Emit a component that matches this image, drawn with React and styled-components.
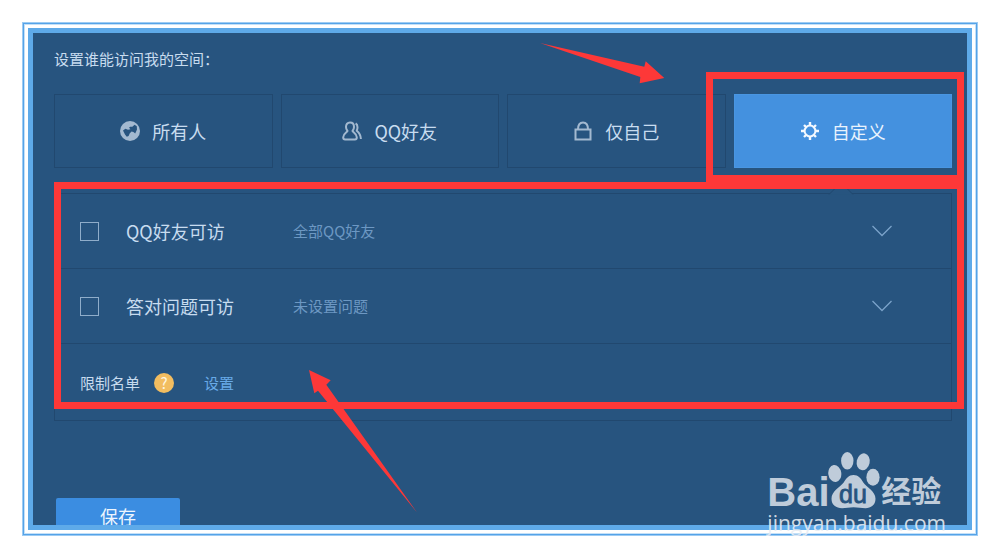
import React from "react";
import styled, { createGlobalStyle } from "styled-components";

const RED = "#fd3838";
const LINE = "#21486f";

const options = [
  { icon: "globe", title: "所有人" },
  { icon: "friends", title: "QQ好友" },
  { icon: "lock", title: "仅自己" },
  { icon: "gear", title: "自定义", active: true },
];

const rules = [
  { id: "friends", title: "QQ好友可访", text: "全部QQ好友" },
  { id: "question", title: "答对问题可访", text: "未设置问题" },
];

const GlobalStyle = createGlobalStyle`
  * {
    box-sizing: border-box;
  }
  body {
    margin: 0;
    background: #fff;
    font-family: "Noto Sans CJK SC", sans-serif;
  }
  button {
    font-family: inherit;
    cursor: pointer;
  }
`;

const Frame = styled.div`
  position: relative;
  margin: 22px;
  padding: 5px;
  border: 1px solid #9ccbf3;
  box-shadow: inset 0 0 0 1px #55a3e8, inset 0 0 0 2px #c3e0f8;
`;

const Page = styled.main`
  padding: 16px 15px 0 21px;
  border: 5px solid #5eaae9;
  background: #27547f;
  color: #c8dcef;
`;

const Title = styled.h1`
  margin: 0 0 25px;
  font-size: 15px;
  line-height: 20px;
  font-weight: 400;
`;

const Options = styled.div`
  position: relative;
  display: grid;
  grid-template-columns: repeat(4, 1fr);
  gap: 8px;
`;

const OptionCell = styled.div`
  position: relative;
  display: flex;
`;

const OptionButton = styled.button`
  flex: 1;
  display: flex;
  align-items: center;
  justify-content: center;
  gap: 12px;
  height: 74px;
  padding: 0;
  border: 1px solid ${({ $active }) => ($active ? "#4996e2" : LINE)};
  background: ${({ $active }) => ($active ? "#4491df" : "transparent")};
  color: ${({ $active }) => ($active ? "#e9f3fd" : "#c8dcef")};
  font-size: 18px;
  line-height: 24px;
`;

const OptionIcon = styled.svg`
  width: 20px;
  height: 20px;
  color: ${({ $active }) => ($active ? "#f4f9ff" : "#a3b9d0")};
`;

const OptionMark = styled.div`
  position: absolute;
  z-index: 2;
  top: -22px;
  right: -12px;
  bottom: -14px;
  left: -28px;
  border: 7px solid ${RED};
  pointer-events: none;
`;

const OptionArrow = styled.svg`
  position: absolute;
  z-index: 2;
  top: -54px;
  right: 285px;
  width: 128px;
  height: 46px;
  fill: ${RED};
  pointer-events: none;
`;

const Panel = styled.section`
  position: relative;
  margin-top: 25px;
  border: 1px solid ${LINE};
`;

const PanelNotch = styled.svg`
  position: absolute;
  top: -13px;
  right: 97px;
  width: 26px;
  height: 14px;
`;

const PanelMark = styled.div`
  position: absolute;
  z-index: 2;
  top: -12px;
  right: -13px;
  bottom: 11px;
  left: -1px;
  border: 7px solid ${RED};
  pointer-events: none;
`;

const PanelArrow = styled.svg`
  position: absolute;
  z-index: 2;
  top: 174px;
  left: 253px;
  width: 110px;
  height: 146px;
  fill: ${RED};
  pointer-events: none;
`;

const Rule = styled.div`
  display: grid;
  grid-template-columns: 46px 167px 1fr 20px;
  align-items: center;
  height: 75px;
  padding: 0 59px 0 25px;
  border-bottom: 1px solid ${LINE};
`;

const Checkbox = styled.input`
  appearance: none;
  width: 19px;
  height: 19px;
  margin: 0;
  border: 1px solid #8fadca;
  &:checked {
    background: #4491df;
  }
`;

const RuleLabel = styled.label`
  font-size: 18px;
  line-height: 24px;
`;

const RuleText = styled.span`
  color: #6d98c3;
  font-size: 15px;
  line-height: 20px;
`;

const Expand = styled.button`
  display: flex;
  padding: 0;
  border: 0;
  background: none;
  color: #7ba3ca;
`;

const Limit = styled.div`
  display: flex;
  align-items: center;
  height: 76px;
  padding: 2px 25px 0;
  font-size: 15px;
  line-height: 20px;
`;

const Help = styled.button`
  width: 20px;
  height: 20px;
  margin: 0 30px 0 14px;
  padding: 0;
  border: 0;
  border-radius: 50%;
  background: #f2bd60;
  color: #fff6e0;
  font-size: 15px;
  line-height: 20px;
`;

const LimitLink = styled.a`
  color: #68aae8;
  text-decoration: none;
`;

/* the save bar runs under the lower edge of the frame */
const Footer = styled.div`
  height: 27px;
  margin-top: 77px;
  padding-left: 2px;
  overflow: hidden;
`;

const Save = styled.button`
  width: 124px;
  height: 36px;
  padding: 0;
  border: 0;
  border-radius: 2px;
  background: #3b8de1;
  color: #edf5fd;
  font-size: 18px;
  line-height: 34px;
`;

const Watermark = styled.div`
  position: absolute;
  z-index: 3;
  right: 31px;
  bottom: -2px;
  color: #bfccda;
`;

const Brand = styled.div`
  display: flex;
  align-items: flex-end;
  height: 57px;
`;

const BrandLatin = styled.span`
  width: 61px;
  font-family: "Liberation Sans", Arial, sans-serif;
  font-size: 40px;
  font-weight: 700;
  line-height: 34px;
`;

const BrandCjk = styled.span`
  margin-left: 1px;
  padding-bottom: 5px;
  font-size: 30px;
  font-weight: 700;
  line-height: 30px;
`;

const Site = styled.div`
  color: rgba(232, 237, 243, 0.9);
  font-family: "Open Sans", sans-serif;
  font-size: 21px;
  line-height: 28px;
`;

const iconShapes = {
  globe: (
    <>
      <circle cx="10" cy="10" r="10" fill="currentColor" />
      <path
        d="M3 9.400 5.400 7.800 8 8.800 10.400 8.200 9 6.600 11 5.400 12 6 14.600 3.800 16.800 5.200 17 8.600 15.200 12.400 13.400 11 11.600 10.600 9.800 12.200 8.600 15 6.800 15.800 5 13.600Z"
        fill="#27547f"
      />
    </>
  ),
  friends: (
    <g fill="none" stroke="currentColor" strokeWidth="2" strokeLinejoin="round">
      <path d="M8 1.500C5.400 1.500 4 3.300 4 5.900c0 1.700.6 3 1.500 4.100C4.700 11.500 1.200 12.500 1.200 16.200c0 1.600.6 2.300 1.900 2.300h9.800c1.300 0 1.900-.7 1.900-2.300 0-3.700-3.500-4.700-4.300-6.200.9-1.100 1.500-2.400 1.500-4.100C12 3.300 10.600 1.500 8 1.500Z" />
      <path d="M13.600 2.400c1.400.8 1.900 2 1.900 3.800 0 1.400-.3 2.600-.8 3.600 2.600 2 4 3.900 4.200 8.200" />
    </g>
  ),
  lock: (
    <g fill="none" stroke="currentColor" strokeWidth="2">
      <rect x="2.500" y="8.500" width="15" height="10" />
      <path d="M5 8.500C5 4 6.800 1.500 10 1.500s5 2.500 5 7" />
    </g>
  ),
  gear: (
    <g fill="none" stroke="currentColor">
      <circle cx="10" cy="10" r="5.400" strokeWidth="2" />
      <path
        d="M10 1v3.500M10 15.500v3.500M1 10h3.500M15.500 10h3.500M4 4l2 2M14 14l2 2M4 16l2-2M14 6l2-2"
        strokeWidth="2.400"
      />
    </g>
  ),
};

const Paw = () => (
  <svg width="52" height="57" viewBox="0 0 52 57">
    <g fill="currentColor">
      <ellipse cx="6.800" cy="21.500" rx="6.500" ry="8.500" transform="rotate(-8 6.800 21.500)" />
      <ellipse cx="19.300" cy="8.800" rx="6.200" ry="8.700" />
      <ellipse cx="35.200" cy="9.800" rx="6.500" ry="8.500" transform="rotate(12 35.200 9.800)" />
      <ellipse cx="45" cy="25.300" rx="6.600" ry="8.500" />
      <path d="M25.500 23c4.800 0 7.400 3.400 9.800 7.400 3.200 5 12.200 8.400 12.200 16.400 0 6.400-4.600 9.400-10 9.400-4 0-7.600-1-12-1s-7.400 1-11.400 1c-6 0-10.600-3-10.600-9.400 0-8 8.400-11.400 12.200-16.400 2.600-4 5-7.400 9.800-7.400Z" />
    </g>
    <text
      x="25"
      y="51"
      textAnchor="middle"
      fill="#27547f"
      stroke="#27547f"
      strokeWidth="0.8"
      fontFamily="Liberation Sans, Arial, sans-serif"
      fontSize="25"
    >
      du
    </text>
  </svg>
);

const App = () => {
  return (
    <>
      <GlobalStyle />
      <Frame>
        <Page>
          <Title>设置谁能访问我的空间：</Title>

          <Options>
            {options.map((item) => (
              <OptionCell key={item.icon}>
                <OptionButton type="button" $active={item.active}>
                  <OptionIcon viewBox="0 0 20 20" $active={item.active}>
                    {iconShapes[item.icon]}
                  </OptionIcon>
                  {item.title}
                </OptionButton>
                {item.active && <OptionMark />}
              </OptionCell>
            ))}
            <OptionArrow viewBox="0 0 128 46">
              <path d="M1 3 105.300 26.700 106.700 21.300 125.300 38 100.700 43.300 101.300 37Z" />
            </OptionArrow>
          </Options>

          <Panel>
            <PanelNotch viewBox="0 0 26 14">
              <path d="M1 13.500 13 1.500 25 13.500" fill="#27547f" stroke={LINE} />
            </PanelNotch>
            {rules.map((item) => (
              <Rule key={item.id}>
                <Checkbox type="checkbox" id={item.id} />
                <RuleLabel htmlFor={item.id}>{item.title}</RuleLabel>
                <RuleText>{item.text}</RuleText>
                <Expand type="button" aria-label={item.title}>
                  <svg width="20" height="12" viewBox="0 0 20 12">
                    <path d="M.5 1 10 10.500 19.500 1" fill="none" stroke="currentColor" strokeWidth="1.300" />
                  </svg>
                </Expand>
              </Rule>
            ))}
            <Limit>
              限制名单
              <Help type="button">?</Help>
              <LimitLink href="#limit">设置</LimitLink>
            </Limit>
            <PanelMark />
            <PanelArrow viewBox="0 0 110 146">
              <path d="M1 2 22.700 12.300 18.300 16.700 109 144.500 10 22.700 6.300 25.300Z" />
            </PanelArrow>
          </Panel>

          <Footer>
            <Save type="button">保存</Save>
          </Footer>
        </Page>

        <Watermark>
          <Brand>
            <BrandLatin>Bai</BrandLatin>
            <Paw />
            <BrandCjk>经验</BrandCjk>
          </Brand>
          <Site>jingyan.baidu.com</Site>
        </Watermark>
      </Frame>
    </>
  );
};

export default App;
